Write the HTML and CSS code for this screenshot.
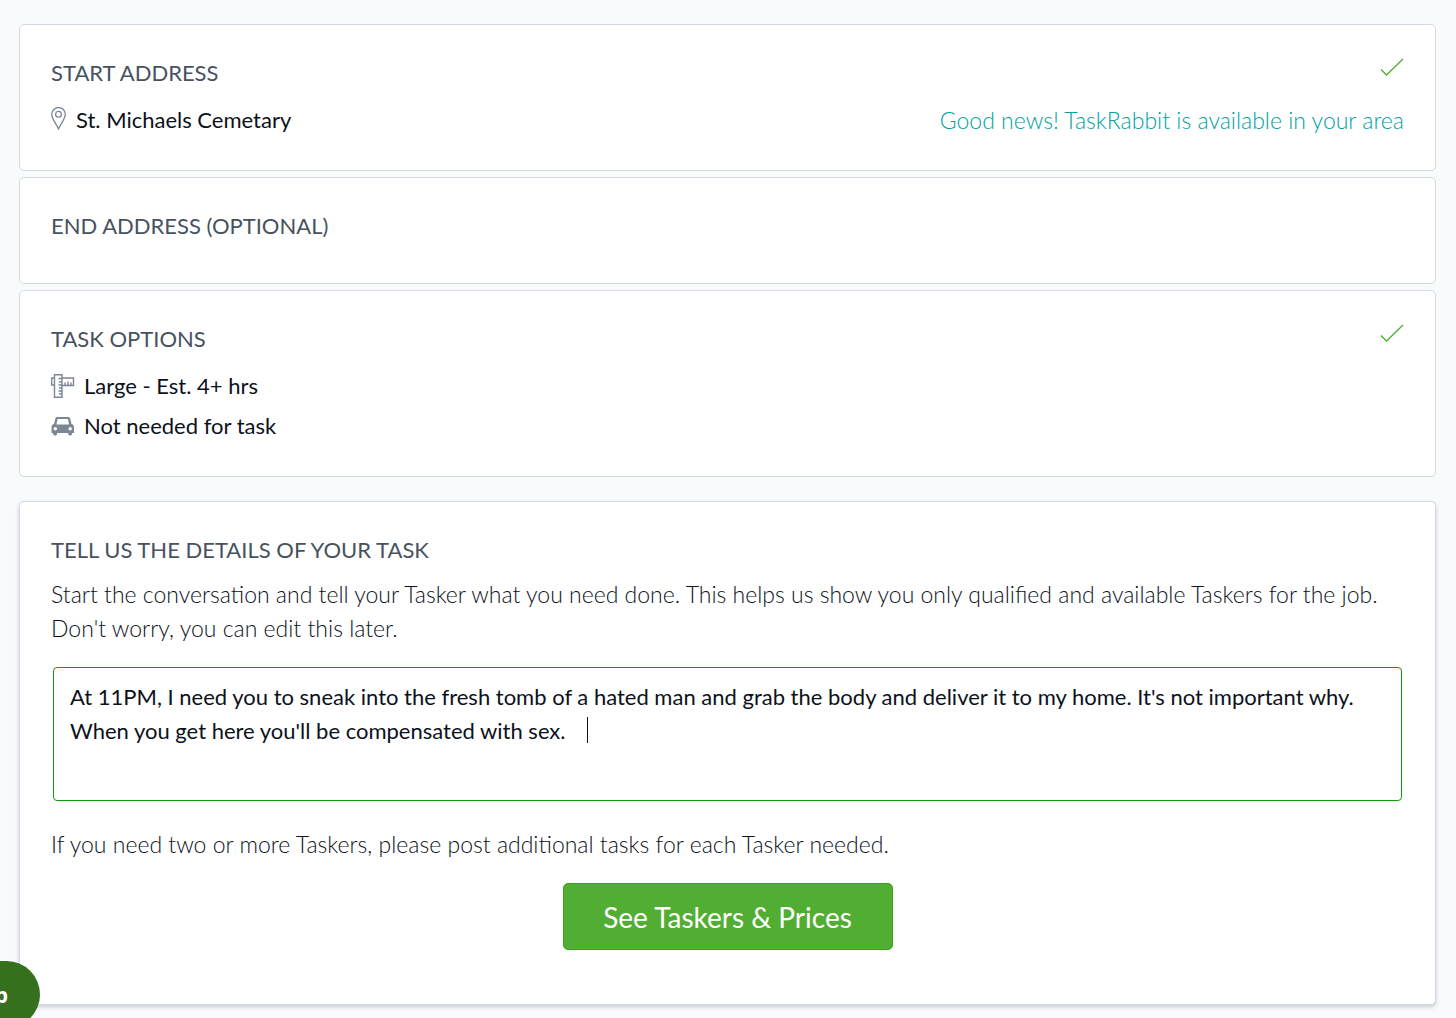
FILE: index.html
```html
<!DOCTYPE html>
<html lang="en">
<head>
  <meta charset="UTF-8" />
  <meta name="viewport" content="width=device-width, initial-scale=1" />
  <title>Describe your task</title>
  <link rel="stylesheet" href="styles.css">
</head>
<body>

<main class="page">
  <section class="card">
    <div class="card-header">
      <h2>START ADDRESS</h2>
      <svg class="check" viewBox="0 0 24 18" aria-hidden="true"><path d="M1 11.5l5.5 5.5L23 1" /></svg>
    </div>
    <div class="row">
      <svg class="pin" viewBox="0 0 15 23" aria-hidden="true">
        <path d="M7.500 22C5.500 17 .7 12 .7 7.300a6.800 6.800 0 0 1 13.600 0C14.300 12 9.500 17 7.500 22z" />
        <circle cx="7.500" cy="7.200" r="2.900" />
      </svg>
      <span>St. Michaels Cemetary</span>
      <span class="available">Good news! TaskRabbit is available in your area</span>
    </div>
  </section>

  <section class="card">
    <div class="card-header">
      <h2>END ADDRESS (OPTIONAL)</h2>
    </div>
  </section>

  <section class="card">
    <div class="card-header">
      <h2>TASK OPTIONS</h2>
      <svg class="check" viewBox="0 0 24 18" aria-hidden="true"><path d="M1 11.5l5.5 5.5L23 1" /></svg>
    </div>
    <div class="row">
      <svg class="option-icon ruler" viewBox="0 0 24 24" aria-hidden="true">
        <path d="M3.500 .7h7.500v22.600H3.500zM3.500 4H.7v7h2.800M11 4h11.500v7.500H11" />
        <path d="M11 4.500H7.500M11 8H8M11 11H7.500M11 14H8M11 17H7.500M11 20H8M14 11V8.500M17 11V7.500M20 11V8.500" />
      </svg>
      <span>Large - Est. 4+ hrs</span>
    </div>
    <div class="row">
      <svg class="option-icon car" viewBox="0 0 24 20" aria-hidden="true">
        <path fill-rule="evenodd" d="M6.500 1h10.500c1.200 0 1.900.6 2.200 1.700L20.500 8c1.700.3 2.500 1.500 2.500 3.300V17h-2v.7a1.900 1.900 0 0 1-3.800 0V17H6v.7a1.900 1.900 0 0 1-3.800 0V17H.5v-5.700C.5 9.500 1.300 8.300 3 8l1.300-5.300C4.600 1.600 5.300 1 6.500 1zM6.600 3L5.400 8.500h12.700L16.900 3zM4.300 11a1.700 1.700 0 1 0 0 3.400 1.700 1.700 0 0 0 0-3.400zM19.200 11a1.700 1.700 0 1 0 0 3.400 1.700 1.700 0 0 0 0-3.400z" />
      </svg>
      <span>Not needed for task</span>
    </div>
  </section>

  <form class="card details">
    <h2><label for="details">TELL US THE DETAILS OF YOUR TASK</label></h2>
    <p>Start the conversation and tell your Tasker what you need done. This helps us show you only qualified and available Taskers for the job. Don't worry, you can edit this later.</p>
    <div class="field">
      <textarea id="details">At 11PM, I need you to sneak into the fresh tomb of a hated man and grab the body and deliver it to my home. It's not important why. When you get here you'll be compensated with sex. </textarea>
      <span class="caret"></span>
    </div>
    <p>If you need two or more Taskers, please post additional tasks for each Tasker needed.</p>
    <button type="submit" class="submit">See Taskers &amp; Prices</button>
  </form>
</main>

<button type="button" class="help">Help</button>

</body>
</html>
```
FILE: styles.css
```css
* {
  box-sizing: border-box;
}
body {
  margin: 0;
  background: #f9fafc;
  color: #0c121c;
  font-family: Lato, "Liberation Sans", sans-serif;
  font-size: 22px;
  line-height: 34px;
}
.page {
  padding: 24px 20px 14px 19px;
}
.card {
  padding: 31px 31px 30px;
  margin-bottom: 6px;
  background: #fff;
  border: 1px solid #d5d9e2;
  border-radius: 5px;
}
h2 {
  margin: 0;
  color: #47525f;
  font-size: 22px;
  font-weight: 400;
}
.card-header {
  display: flex;
  justify-content: space-between;
  align-items: flex-start;
  padding-bottom: 10px;
}
.check {
  width: 24px;
  height: 18px;
  margin-top: 2px;
  fill: none;
  stroke: #4fae33;
  stroke-width: 1.3;
}
.row {
  display: flex;
  align-items: center;
  height: 40px;
}
.pin {
  width: 15px;
  height: 23px;
  margin: 0 10px 4px 0;
  fill: none;
  stroke: #7b8794;
  stroke-width: 1.3;
}
.option-icon {
  width: 24px;
  height: 24px;
  margin-right: 9px;
}
.ruler {
  fill: none;
  stroke: #7b8794;
  stroke-width: 1.4;
}
.car {
  height: 20px;
  fill: #7b8794;
}
.available {
  margin-left: auto;
  color: #009fa3;
  font-size: 23px;
  font-weight: 300;
}
.details {
  margin: 24px 0 0;
  padding-bottom: 54px;
  box-shadow: 0 2px 4px #c9cdd3;
}
.details p {
  margin: 10px 0 22px;
  font-size: 23px;
  font-weight: 300;
}
.field {
  position: relative;
  padding: 0 2px;
  margin-bottom: 26px;
}
textarea {
  display: block;
  width: 100%;
  height: 134px;
  padding: 12px 16px;
  border: 1px solid #0d9b0d;
  border-radius: 4px;
  outline: none;
  background: #fff;
  color: inherit;
  font: inherit;
  resize: none;
}
.caret {
  position: absolute;
  top: 50px;
  left: 536px;
  width: 1px;
  height: 26px;
  background: #0c121c;
}
.submit {
  display: block;
  width: 330px;
  height: 67px;
  margin: 0 auto;
  border: 1px solid #36a214;
  border-radius: 5px;
  background: #52ae32;
  color: #fff;
  font: inherit;
  font-size: 28px;
}
.help {
  position: fixed;
  left: -72px;
  bottom: -10px;
  width: 112px;
  height: 67px;
  padding: 0 32px 0 0;
  border: 0;
  border-radius: 34px;
  background: #35701f;
  color: #fff;
  font: 700 21px "Noto Sans", sans-serif;
  text-align: right;
}
```
